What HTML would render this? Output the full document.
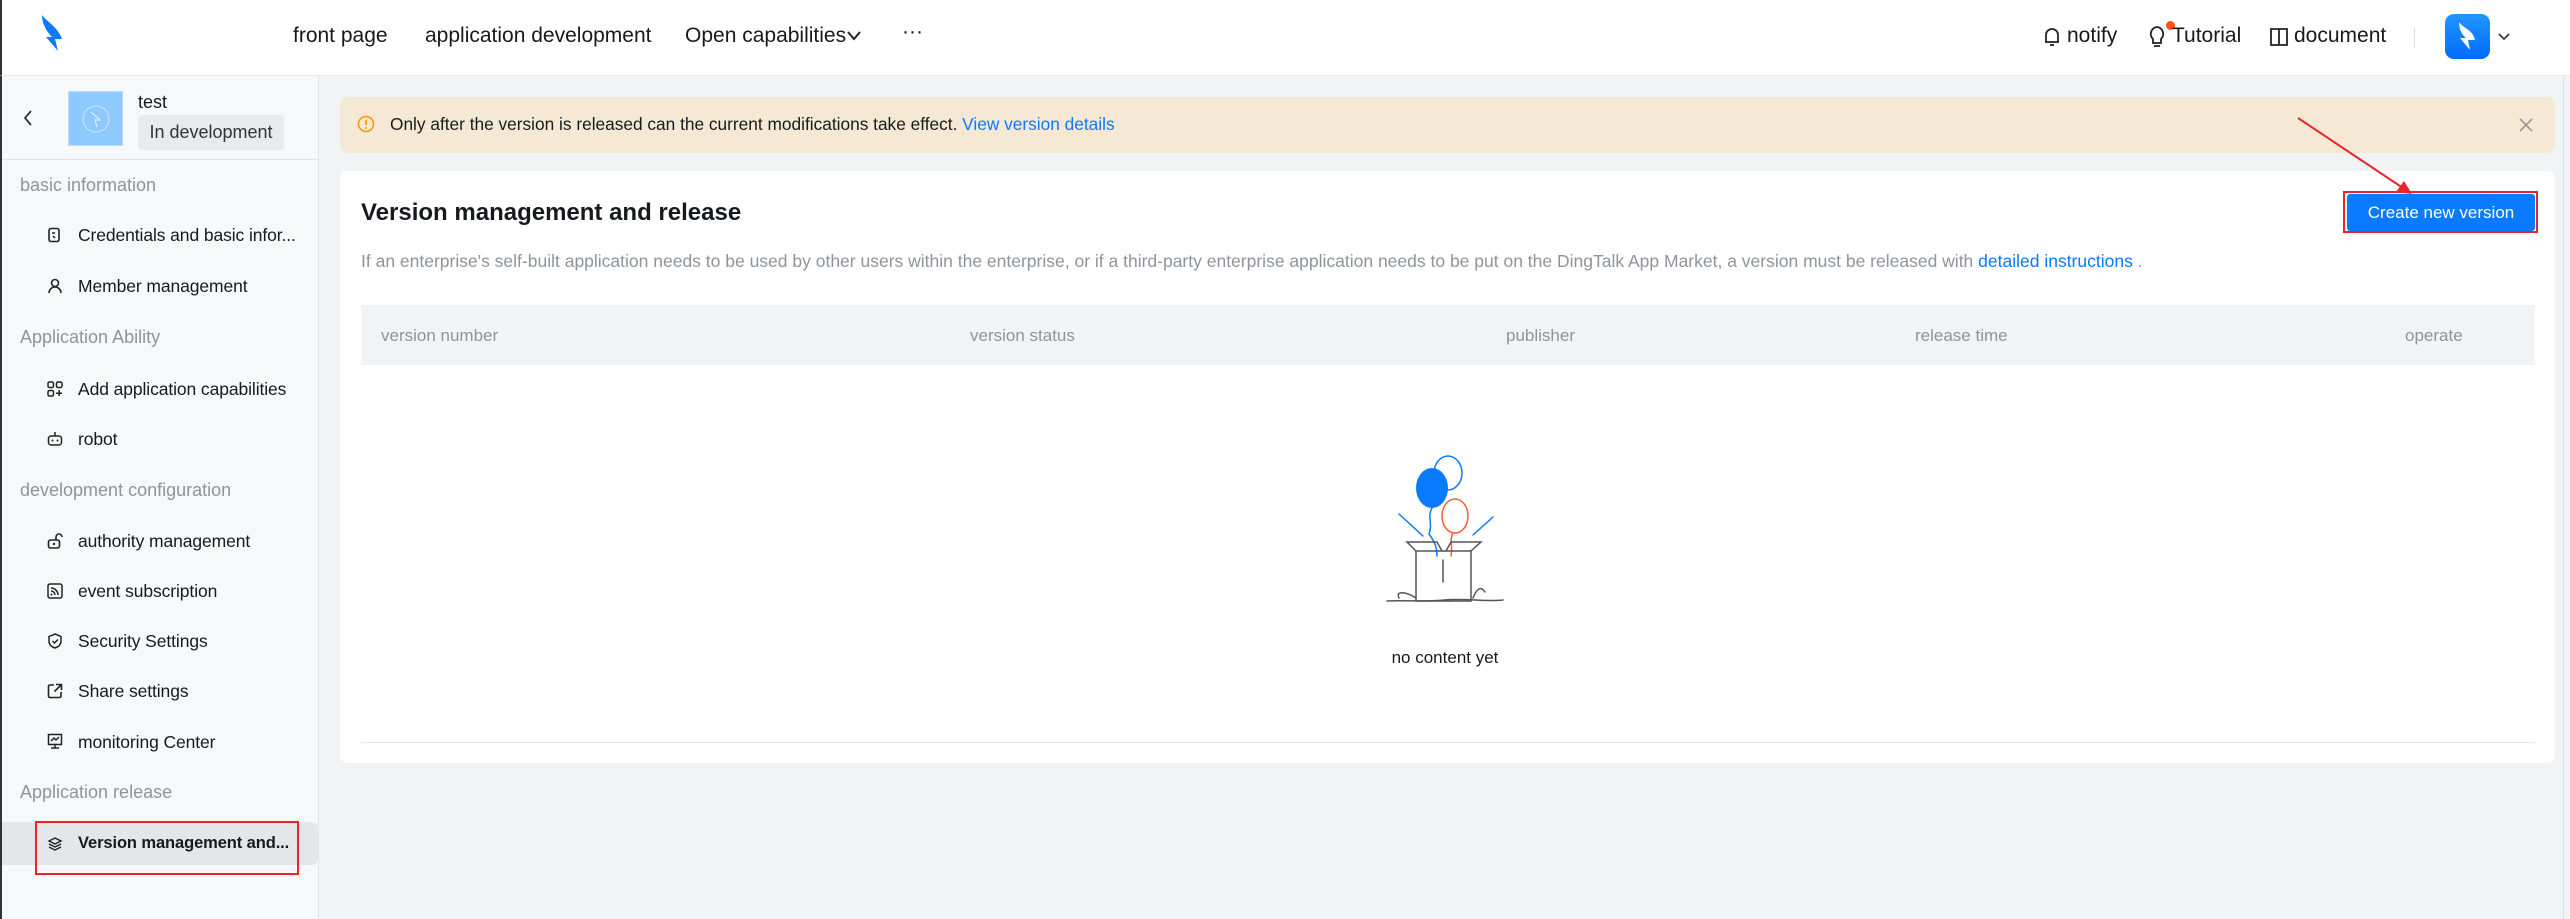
<!DOCTYPE html>
<html><head><meta charset="utf-8"><style>
*{box-sizing:border-box;margin:0;padding:0}
body{width:2570px;height:919px;overflow:hidden;background:#f2f3f5;font-family:"Liberation Sans",sans-serif;color:#171a1d;position:relative}
.abs{position:absolute}
.hdr{left:0;top:0;width:2570px;height:76px;background:#fff;border-bottom:1px solid #e6e8eb;border-left:2px solid #333}
.nav{font-size:21px;color:#171a1d;top:24px}
.side{left:0;top:76px;width:319px;height:843px;background:#f7f8fa;border-right:1px solid #e3e5e8;border-left:2px solid #333}
.grp{font-size:18px;color:#8f949b;left:20px}
.it{font-size:17.5px;color:#171a1d;left:78px;letter-spacing:-0.1px}
.ic{left:47px;width:16px;height:16px}
.th{font-size:17px;color:#8f949b;top:326px}
</style></head><body>
<div class="abs hdr"></div>
<svg class="abs" style="left:38px;top:13px" width="30" height="40" viewBox="0 0 30 40"><path d="M4 2 C8 8 20 14 24 26 L17 26 L20 38 L8 24 L14 24 C8 18 4 10 4 2Z" fill="#0a7aff"/></svg>
<div class="abs nav" style="left:293px">front page</div>
<div class="abs nav" style="left:425px">application development</div>
<div class="abs nav" style="left:685px">Open capabilities</div>
<svg class="abs" style="left:846px;top:30px" width="16" height="12"><path d="M2 2 L8 9 L14 2" stroke="#222" stroke-width="2" fill="none"/></svg>
<div class="abs nav" style="left:902px;top:20px">···</div>
<svg class="abs" style="left:2042px;top:26px" width="20" height="22"><path d="M4 16 V9 a6 6 0 0 1 12 0 V16 H3 H17 M8 19 h4" stroke="#222" stroke-width="1.8" fill="none"/></svg>
<div class="abs nav" style="left:2067px">notify</div>
<svg class="abs" style="left:2148px;top:25px" width="18" height="24"><path d="M9 2 a7 7 0 0 0 -4 12 v4 h8 v-4 a7 7 0 0 0 -4 -12 M6 21 h6" stroke="#222" stroke-width="1.8" fill="none"/></svg>
<div class="abs" style="left:2166px;top:21px;width:9px;height:9px;border-radius:50%;background:#ff5219"></div>
<div class="abs nav" style="left:2172px">Tutorial</div>
<svg class="abs" style="left:2269px;top:27px" width="20" height="20"><path d="M2 2 h16 v16 h-16z M10 2 v16" stroke="#222" stroke-width="1.8" fill="none"/></svg>
<div class="abs nav" style="left:2294px">document</div>
<div class="abs" style="left:2414px;top:28px;width:1px;height:20px;background:#ddd"></div>
<div class="abs" style="left:2445px;top:14px;width:45px;height:45px;border-radius:9px;background:linear-gradient(#2196ff,#006bff)"></div>
<svg class="abs" style="left:2453px;top:18px" width="30" height="38" viewBox="0 0 30 38"><path d="M6 4 C10 10 20 12 22 22 L15 22 L17 32 L7 20 L13 20 C8 16 6 10 6 4Z" fill="#fff"/></svg>
<svg class="abs" style="left:2497px;top:32px" width="14" height="10"><path d="M2 2 L7 7 L12 2" stroke="#333" stroke-width="1.6" fill="none"/></svg>

<div class="abs side"></div>
<svg class="abs" style="left:22px;top:109px" width="12" height="18"><path d="M9 2 L3 9 L9 16" stroke="#333" stroke-width="1.8" fill="none"/></svg>
<div class="abs" style="left:68px;top:91px;width:55px;height:55px;background:#8ec9ff;border:1px solid #b8dcff"></div>
<svg class="abs" style="left:80px;top:103px" width="32" height="32"><circle cx="16" cy="16" r="13" stroke="#cfe7ff" fill="none"/><path d="M11 9 L20 17 L15 17 L17 24" stroke="#e6f3ff" fill="none"/></svg>
<div class="abs" style="left:138px;top:92px;font-size:18px">test</div>
<div class="abs" style="left:138px;top:115px;width:146px;height:35px;background:#e8eaed;border-radius:4px;font-size:18px;line-height:35px;text-align:center;color:#333">In development</div>
<div class="abs" style="left:2px;top:159px;width:317px;height:1px;background:#e3e5e8"></div>

<div class="abs grp" style="top:175px">basic information</div>
<svg class="abs ic" style="top:227px" viewBox="0 0 16 16"><rect x="2" y="1.5" width="10" height="13" rx="2" stroke="#222" stroke-width="1.6" fill="none"/><path d="M5 6h3 M6 9 l2 2" stroke="#222" stroke-width="1.5"/></svg>
<div class="abs it" style="top:225px">Credentials and basic infor...</div>
<svg class="abs ic" style="top:278px" viewBox="0 0 16 16"><circle cx="8" cy="5" r="3.5" stroke="#222" stroke-width="1.6" fill="none"/><path d="M2 15 a6 6 0 0 1 12 0" stroke="#222" stroke-width="1.6" fill="none"/></svg>
<div class="abs it" style="top:276px">Member management</div>
<div class="abs grp" style="top:327px">Application Ability</div>
<svg class="abs ic" style="top:381px" viewBox="0 0 16 16"><g stroke="#222" stroke-width="1.5" fill="none"><rect x="1" y="1" width="5.5" height="5.5" rx="1.5"/><rect x="9.5" y="1" width="5.5" height="5.5" rx="1.5"/><rect x="1" y="9.5" width="5.5" height="5.5" rx="1.5"/><path d="M12.2 9v6 M9 12.2h6"/></g></svg>
<div class="abs it" style="top:379px">Add application capabilities</div>
<svg class="abs ic" style="top:431px" viewBox="0 0 16 16"><g stroke="#222" stroke-width="1.5" fill="none"><rect x="1.5" y="5" width="13" height="9" rx="2.5"/><path d="M8 1v4"/></g><circle cx="5.5" cy="9.5" r="1" fill="#222"/><circle cx="10.5" cy="9.5" r="1" fill="#222"/></svg>
<div class="abs it" style="top:429px">robot</div>
<div class="abs grp" style="top:480px">development configuration</div>
<svg class="abs ic" style="top:533px" viewBox="0 0 16 16"><g stroke="#222" stroke-width="1.6" fill="none"><rect x="1.5" y="7" width="11" height="8" rx="2"/><path d="M9 7 V4 a3 3 0 0 1 6 0"/></g><circle cx="7" cy="11" r="1.2" fill="#222"/></svg>
<div class="abs it" style="top:531px">authority management</div>
<svg class="abs ic" style="top:583px" viewBox="0 0 16 16"><g stroke="#222" stroke-width="1.5" fill="none"><rect x="1" y="1" width="14" height="14" rx="2"/><path d="M4 5 a7 7 0 0 1 7 7 M4 8 a4 4 0 0 1 4 4"/></g><circle cx="4.5" cy="11.5" r="1" fill="#222"/></svg>
<div class="abs it" style="top:581px">event subscription</div>
<svg class="abs ic" style="top:633px" viewBox="0 0 16 16"><path d="M8 1 L14 3.5 V8 C14 12 11 14 8 15 C5 14 2 12 2 8 V3.5Z M5.5 8 L7.5 10 L11 6.5" stroke="#222" stroke-width="1.5" fill="none"/></svg>
<div class="abs it" style="top:631px">Security Settings</div>
<svg class="abs ic" style="top:683px" viewBox="0 0 16 16"><path d="M7 2 H3 a1.5 1.5 0 0 0 -1.5 1.5 V13 a1.5 1.5 0 0 0 1.5 1.5 H12.5 a1.5 1.5 0 0 0 1.5 -1.5 V9 M9 1.5 h5.5 v5.5 M14 2 L7.5 8.5" stroke="#222" stroke-width="1.6" fill="none"/></svg>
<div class="abs it" style="top:681px">Share settings</div>
<svg class="abs ic" style="top:733px" viewBox="0 0 16 16"><path d="M1.5 1.5 h13 v10 h-13z M8 11.5 v3 M4 15 h8 M4 8 L7 5 L9 7 L12 4" stroke="#222" stroke-width="1.5" fill="none"/></svg>
<div class="abs it" style="top:732px">monitoring Center</div>
<div class="abs grp" style="top:782px">Application release</div>
<div class="abs" style="left:2px;top:822px;width:316px;height:43px;background:#e4e6e9;border-radius:0 6px 6px 0"></div>
<div class="abs" style="left:35px;top:821px;width:264px;height:54px;border:2px solid #e8252a"></div>
<svg class="abs ic" style="top:836px" viewBox="0 0 16 16"><path d="M8 2 L14 5 L8 8 L2 5Z M2 8 L8 11 L14 8 M2 11 L8 14 L14 11" stroke="#222" stroke-width="1.4" fill="none"/></svg>
<div class="abs it" style="top:834px;font-weight:bold;font-size:16.5px">Version management and...</div>

<div class="abs" style="left:340px;top:97px;width:2215px;height:56px;background:#f5e9d6;border-radius:8px"></div>
<svg class="abs" style="left:357px;top:115px" width="18" height="18"><circle cx="9" cy="9" r="7.5" stroke="#ff9200" stroke-width="1.5" fill="none"/><path d="M9 5v5" stroke="#ff9200" stroke-width="1.6"/><circle cx="9" cy="13" r="1" fill="#ff9200"/></svg>
<div class="abs" style="left:390px;top:114px;font-size:17.3px;color:#171a1d">Only after the version is released can the current modifications take effect. <span style="color:#0a7aff">View version details</span></div>
<svg class="abs" style="left:2518px;top:117px" width="16" height="16"><path d="M2 2 L14 14 M14 2 L2 14" stroke="#999" stroke-width="1.6"/></svg>

<div class="abs" style="left:340px;top:171px;width:2215px;height:592px;background:#fff;border-radius:8px"></div>
<div class="abs" style="left:361px;top:199px;font-size:24px;font-weight:bold;color:#171a1d">Version management and release</div>
<div class="abs" style="left:2347px;top:194px;width:188px;height:37px;background:#0a7aff;border-radius:3px;color:#fff;font-size:17px;line-height:37px;text-align:center">Create new version</div>
<div class="abs" style="left:2343px;top:191px;width:195px;height:42px;border:2px solid #e8252a"></div>
<svg class="abs" style="left:2290px;top:110px" width="140" height="90"><path d="M8 8 L116 80" stroke="#e8252a" stroke-width="2"/><path d="M122 84 L106 82 L114 71Z" fill="#e8252a"/></svg>
<div class="abs" style="left:361px;top:251px;font-size:17.5px;color:#8f949b">If an enterprise's self-built application needs to be used by other users within the enterprise, or if a third-party enterprise application needs to be put on the DingTalk App Market, a version must be released with <span style="color:#0a7aff">detailed instructions</span> .</div>
<div class="abs" style="left:361px;top:305px;width:2174px;height:60px;background:#f2f3f5"></div>
<div class="abs th" style="left:381px">version number</div>
<div class="abs th" style="left:970px">version status</div>
<div class="abs th" style="left:1506px">publisher</div>
<div class="abs th" style="left:1915px">release time</div>
<div class="abs th" style="left:2405px">operate</div>

<svg class="abs" style="left:1385px;top:452px" width="120" height="152" viewBox="0 0 120 152">
<g fill="none" stroke-linecap="round">
<ellipse cx="63" cy="21" rx="14" ry="17" stroke="#0a7aff" stroke-width="1.5"/>
<ellipse cx="47" cy="36" rx="16" ry="20" fill="#0a7aff"/>
<path d="M47 56 C42 64 48 72 44 82 C50 90 52 96 52 104" stroke="#0a7aff" stroke-width="1.5"/>
<ellipse cx="70" cy="64" rx="13" ry="17" stroke="#ff5a2b" stroke-width="1.5"/>
<path d="M68 81 C64 88 68 94 66 104" stroke="#ff5a2b" stroke-width="1.5"/>
<path d="M14 62 L38 84 M108 65 L88 83" stroke="#0a7aff" stroke-width="1.5"/>
<g stroke="#555" stroke-width="1.5"><path d="M31 99 h55 v50 h-55z"/><path d="M31 99 L22 90 H52 L57 99 M86 99 L96 90 H66 L61 99 M58 108 V130 M2 149 C20 148 40 150 60 148 S100 150 118 148"/><path d="M31 146 C22 140 10 138 14 146 M88 146 C92 136 96 134 100 140"/></g>
</g></svg>
<div class="abs" style="left:1385px;top:648px;width:120px;text-align:center;font-size:17px;color:#171a1d">no content yet</div>
<div class="abs" style="left:361px;top:742px;width:2174px;height:1px;background:#e6e8eb"></div>
<div class="abs" style="left:2563px;top:76px;width:1px;height:843px;background:#ddd"></div>
</body></html>
